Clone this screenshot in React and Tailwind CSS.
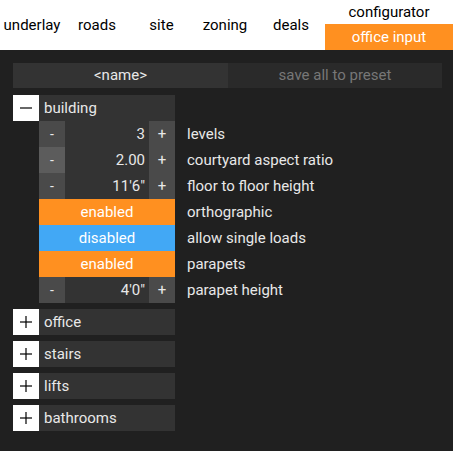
import React from "react";

const font = { fontFamily: "Roboto, 'Noto Sans', sans-serif" };

function NumberRow({ value, label, hot }) {
  return (
    <div className="flex items-center h-[26px]">
      <div className="flex w-[136px] h-full ml-[26px]">
        <button className={`w-[26px] h-full text-[#e8e8e8] text-[14px] ${hot ? "bg-[#5c5c5c]" : "bg-[#4a4a4a]"}`}>-</button>
        <div className="flex-1 bg-[#333333] text-[#e8e8e8] text-[15px] text-right pr-[4px] leading-[26px]">{value}</div>
        <button className="w-[26px] h-full bg-[#4a4a4a] text-[#e8e8e8] text-[15px]">+</button>
      </div>
      <div className="pl-[12px] text-[15px] text-[#e8e8e8]">{label}</div>
    </div>
  );
}

function ToggleRow({ on, label }) {
  return (
    <div className="flex items-center h-[26px]">
      <div className={`ml-[26px] w-[136px] h-full text-center leading-[26px] text-[15px] text-white ${on ? "bg-[#ff9020]" : "bg-[#42a8f5]"}`}>
        {on ? "enabled" : "disabled"}
      </div>
      <div className="pl-[12px] text-[15px] text-[#e8e8e8]">{label}</div>
    </div>
  );
}

function Section({ title, open }) {
  return (
    <div className="flex h-[26px] w-[162px]">
      <div className="w-[26px] h-full bg-white flex items-center justify-center">
        <svg width="14" height="14" viewBox="0 0 14 14">
          <path d="M1 7 H13" stroke="black" strokeWidth="1.2" />
          {!open && <path d="M7 1 V13" stroke="black" strokeWidth="1.2" />}
        </svg>
      </div>
      <div className="flex-1 bg-[#333333] text-[#e8e8e8] text-[15px] leading-[26px] pl-[5px]">{title}</div>
    </div>
  );
}

export default function App() {
  const tabs = [
    ["underlay", "w-[64px]"],
    ["roads", "w-[66px]"],
    ["site", "w-[63px]"],
    ["zoning", "w-[64px]"],
    ["deals", "w-[68px]"],
  ];
  return (
    <div className="w-[453px] h-[451px] bg-[#202020] flex flex-col" style={font}>
      <div className="h-[50px] bg-white flex">
        {tabs.map(([t, w]) => (
          <div key={t} className={`${w} flex items-center justify-center text-[15px] text-black`}>{t}</div>
        ))}
        <div className="flex-1 flex flex-col">
          <div className="h-[24px] flex items-center justify-center text-[15px] text-black">configurator</div>
          <div className="h-[26px] bg-[#ff9020] flex items-center justify-center text-[15px] text-white">office input</div>
        </div>
      </div>
      <div className="px-[13px] pt-[13px]">
        <div className="flex h-[25px] w-[429px]">
          <div className="w-[215px] bg-[#333333] text-[#e8e8e8] text-[15px] flex items-center justify-center">&lt;name&gt;</div>
          <div className="flex-1 bg-[#2a2a2a] text-[#777777] text-[15px] flex items-center justify-center">save all to preset</div>
        </div>
        <div className="mt-[7px]">
          <Section title="building" open />
          <NumberRow value="3" label="levels" />
          <NumberRow value="2.00" label="courtyard aspect ratio" hot />
          <NumberRow value={"11'6\""} label="floor to floor height" />
          <ToggleRow on label="orthographic" />
          <ToggleRow on={false} label="allow single loads" />
          <ToggleRow on label="parapets" />
          <NumberRow value={"4'0\""} label="parapet height" />
        </div>
        <div className="mt-[6px] flex flex-col gap-[6px]">
          <Section title="office" />
          <Section title="stairs" />
          <Section title="lifts" />
          <Section title="bathrooms" />
        </div>
      </div>
    </div>
  );
}
